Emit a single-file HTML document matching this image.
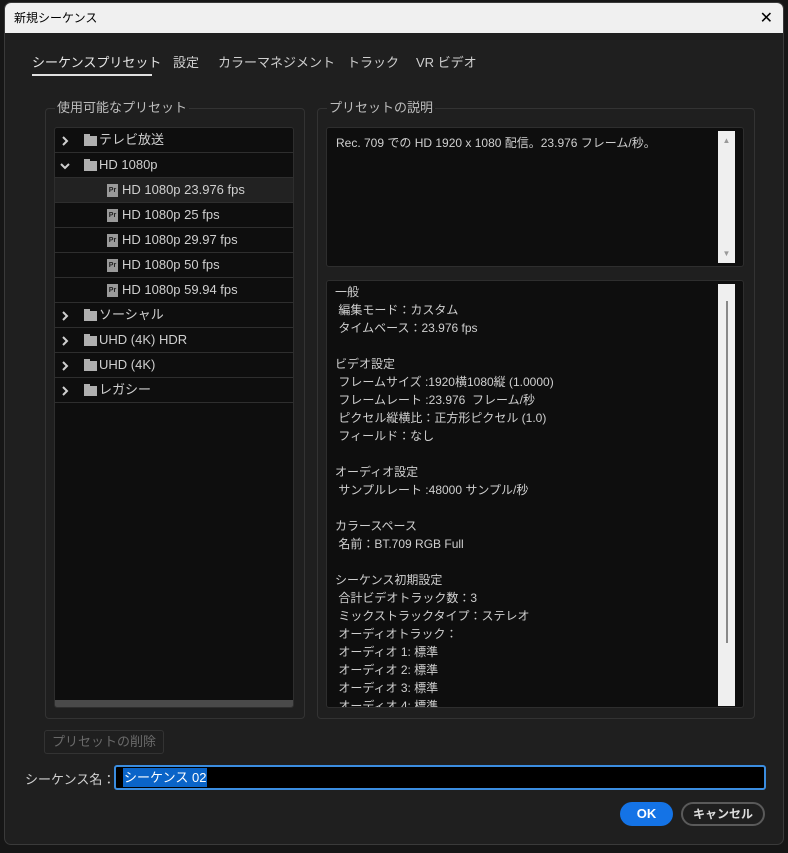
<!DOCTYPE html>
<html><head><meta charset="utf-8"><style>
*{margin:0;padding:0;box-sizing:border-box}
body{width:788px;height:853px;background:#161616;font-family:"Liberation Sans","Noto Sans CJK JP",sans-serif;font-size:13px;color:#cfcfcf;position:relative;overflow:hidden}
.dlg{position:absolute;left:4px;top:2px;width:780px;height:843px;background:#1f1f1f;border:1px solid #3a3a3a;border-radius:7px;overflow:hidden}
.title{position:absolute;left:0;top:0;width:100%;height:30px;background:#f0f0f0;color:#000;font-size:12px;padding:6px 0 0 9px}
.x{position:absolute;right:10px;top:5px;font-size:16px;color:#000}
.abs{position:absolute}
.tab{position:absolute;top:49px;font-size:13px;color:#cfcfcf}
.grp{position:absolute;border:1px solid #333;border-radius:4px}
.glabel{position:absolute;background:#1f1f1f;color:#bdbdbd;font-size:13px;padding:0 2px}
.box{position:absolute;background:#0e0e0e;border:1px solid #2e2e2e;border-radius:3px;overflow:hidden}
.row{position:absolute;left:0;width:238px;height:25px;border-bottom:1px solid #2e2e2e;font-size:13px;color:#cfcfcf;line-height:24px}
.fold{position:absolute;left:29px;top:8px;width:13px;height:10px;background:#b0b0b0}
.fold:before{content:"";position:absolute;left:0;top:-2px;width:6px;height:3px;background:#b0b0b0}
.chev{position:absolute;left:5px;top:8px}
.pr{position:absolute;left:52px;top:6px;width:11px;height:13px;background:#9a9a9a;font-size:7px;color:#222;line-height:14px;text-align:center;font-weight:bold}
.info div{height:18px;line-height:18px;white-space:pre}
</style></head><body>
<div class="dlg">
<div class="title">新規シーケンス<span class="x">✕</span></div>
<div class="tab" style="left:27px;color:#e6e6e6">シーケンスプリセット</div>
<div class="abs" style="left:27px;top:71px;width:120px;height:2px;background:#e0e0e0"></div>
<div class="tab" style="left:168px">設定</div>
<div class="tab" style="left:213px">カラーマネジメント</div>
<div class="tab" style="left:342px">トラック</div>
<div class="tab" style="left:411px">VR ビデオ</div>

<div class="grp" style="left:40px;top:105px;width:260px;height:611px"></div>
<div class="glabel" style="left:50px;top:94px">使用可能なプリセット</div>
<div class="box" style="left:49px;top:124px;width:240px;height:581px">
<div class="row" style="top:0"><svg class="chev" width="10" height="10"><path d="M3 1l4 4-4 4" stroke="#cfcfcf" stroke-width="2" fill="none"/></svg><span class="fold"></span><span style="position:absolute;left:44px">テレビ放送</span></div>
<div class="row" style="top:25px"><svg class="chev" width="10" height="10"><path d="M1 3l4 4 4-4" stroke="#cfcfcf" stroke-width="2" fill="none"/></svg><span class="fold"></span><span style="position:absolute;left:44px">HD 1080p</span></div>
<div class="row" style="top:50px;background:#222"><span class="pr">Pr</span><span style="position:absolute;left:67px">HD 1080p 23.976 fps</span></div>
<div class="row" style="top:75px"><span class="pr">Pr</span><span style="position:absolute;left:67px">HD 1080p 25 fps</span></div>
<div class="row" style="top:100px"><span class="pr">Pr</span><span style="position:absolute;left:67px">HD 1080p 29.97 fps</span></div>
<div class="row" style="top:125px"><span class="pr">Pr</span><span style="position:absolute;left:67px">HD 1080p 50 fps</span></div>
<div class="row" style="top:150px"><span class="pr">Pr</span><span style="position:absolute;left:67px">HD 1080p 59.94 fps</span></div>
<div class="row" style="top:175px"><svg class="chev" width="10" height="10"><path d="M3 1l4 4-4 4" stroke="#cfcfcf" stroke-width="2" fill="none"/></svg><span class="fold"></span><span style="position:absolute;left:44px">ソーシャル</span></div>
<div class="row" style="top:200px"><svg class="chev" width="10" height="10"><path d="M3 1l4 4-4 4" stroke="#cfcfcf" stroke-width="2" fill="none"/></svg><span class="fold"></span><span style="position:absolute;left:44px">UHD (4K) HDR</span></div>
<div class="row" style="top:225px"><svg class="chev" width="10" height="10"><path d="M3 1l4 4-4 4" stroke="#cfcfcf" stroke-width="2" fill="none"/></svg><span class="fold"></span><span style="position:absolute;left:44px">UHD (4K)</span></div>
<div class="row" style="top:250px"><svg class="chev" width="10" height="10"><path d="M3 1l4 4-4 4" stroke="#cfcfcf" stroke-width="2" fill="none"/></svg><span class="fold"></span><span style="position:absolute;left:44px">レガシー</span></div>
<div class="abs" style="left:0;top:572px;width:238px;height:8px;background:#4a4a4a"></div>
</div>

<div class="grp" style="left:312px;top:105px;width:438px;height:611px"></div>
<div class="glabel" style="left:322px;top:94px">プリセットの説明</div>
<div class="box" style="left:321px;top:124px;width:418px;height:140px">
<div class="abs" style="left:9px;top:6px;font-size:12px">Rec. 709 での HD 1920 x 1080 配信。23.976 フレーム/秒。</div>
<div class="abs" style="left:391px;top:3px;width:17px;height:132px;background:#efefef"><div style="font-size:8px;color:#999;text-align:center;margin-top:5px">▲</div><div style="font-size:8px;color:#999;text-align:center;position:absolute;bottom:5px;width:17px">▼</div></div>
</div>
<div class="box" style="left:321px;top:277px;width:418px;height:428px">
<div class="info abs" style="left:8px;top:2px;font-size:12px">
<div>一般</div><div> 編集モード：カスタム</div><div> タイムベース：23.976 fps</div><div> </div>
<div>ビデオ設定</div><div> フレームサイズ :1920横1080縦 (1.0000)</div><div> フレームレート :23.976  フレーム/秒</div><div> ピクセル縦横比：正方形ピクセル (1.0)</div><div> フィールド：なし</div><div> </div>
<div>オーディオ設定</div><div> サンプルレート :48000 サンプル/秒</div><div> </div>
<div>カラースペース</div><div> 名前：BT.709 RGB Full</div><div> </div>
<div>シーケンス初期設定</div><div> 合計ビデオトラック数：3</div><div> ミックストラックタイプ：ステレオ</div><div> オーディオトラック：</div><div> オーディオ 1: 標準</div><div> オーディオ 2: 標準</div><div> オーディオ 3: 標準</div><div> オーディオ 4: 標準</div>
</div>
<div class="abs" style="left:391px;top:3px;width:17px;height:422px;background:#efefef"><div style="position:absolute;left:8px;top:17px;width:2px;height:342px;background:#888"></div></div>
</div>

<div class="abs" style="left:39px;top:727px;width:120px;height:24px;border:1px solid #333;border-radius:3px;color:#6a6a6a;font-size:13px;text-align:center;line-height:22px">プリセットの削除</div>
<div class="abs" style="left:20px;top:766px;font-size:13px;color:#cfcfcf">シーケンス名：</div>
<div class="abs" style="left:109px;top:762px;width:652px;height:25px;background:#000;border:2px solid #3b8de0;border-radius:3px"><span style="position:absolute;left:7px;top:1px;background:#0a64c8;color:#fff;font-size:13px;line-height:19px;padding:0 1px">シーケンス 02</span></div>
<div class="abs" style="left:615px;top:799px;width:53px;height:24px;background:#1473e6;border-radius:12px;color:#fff;font-weight:bold;font-size:13px;text-align:center;line-height:24px">OK</div>
<div class="abs" style="left:676px;top:799px;width:84px;height:24px;border:2px solid #5a5a5a;border-radius:12px;color:#ddd;font-weight:bold;font-size:12px;text-align:center;line-height:20px">キャンセル</div>
</div>
</body></html>
